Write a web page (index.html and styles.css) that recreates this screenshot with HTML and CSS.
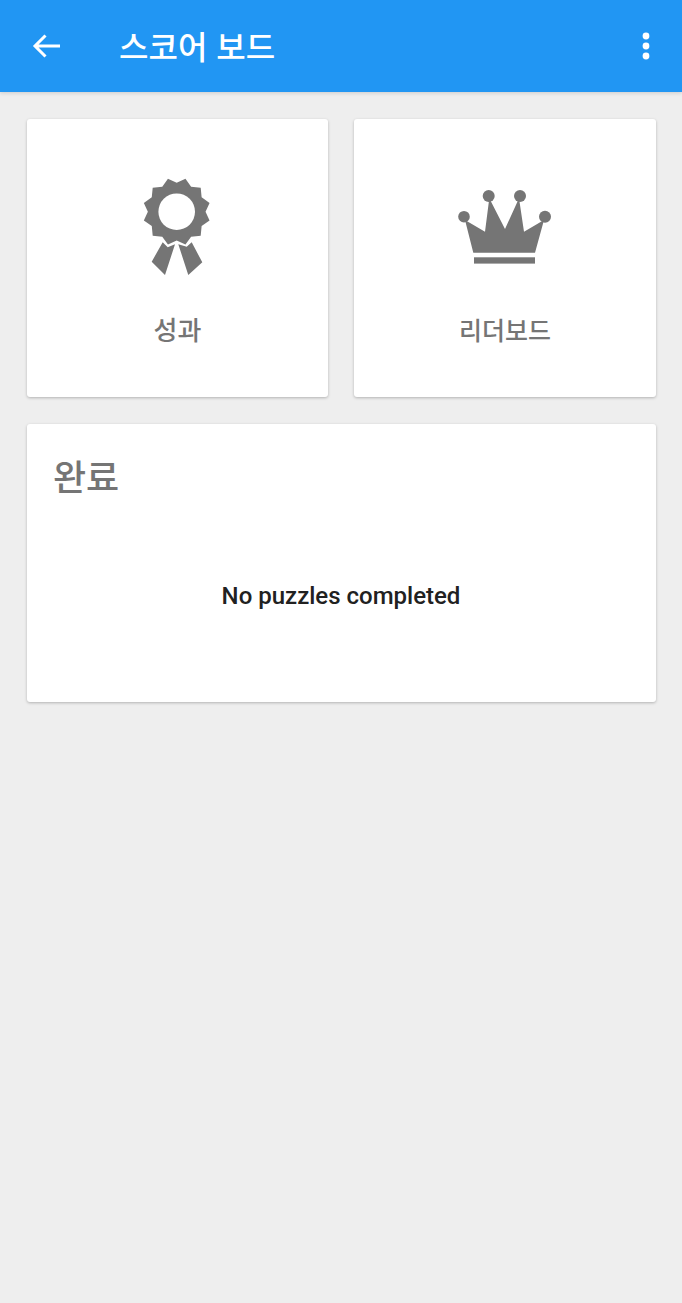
FILE: index.html
```html
<!DOCTYPE html>
<html lang="ko">
<head>
    <meta charset="UTF-8">
    <meta name="viewport" content="width=device-width, initial-scale=1.0">
    <title>스코어 보드</title>
    <link rel="stylesheet" href="styles.css">
</head>
<body>
    <header class="app-bar">
        <svg class="back-icon" viewBox="0 0 30 26" width="30" height="26">
            <path d="M28 13H3M13.5 2.5L3 13l10.5 10.5" fill="none" stroke="#fff" stroke-width="3"/>
        </svg>
        <h1 class="app-title">스코어 보드</h1>
        <svg class="menu-icon" viewBox="0 0 8 28" width="8" height="28">
            <circle cx="4" cy="4" r="3.4" fill="#fff"/>
            <circle cx="4" cy="14" r="3.4" fill="#fff"/>
            <circle cx="4" cy="24" r="3.4" fill="#fff"/>
        </svg>
    </header>
    <main class="content">
        <div class="tile-row">
            <div class="card tile">
                <svg class="tile-icon rosette" viewBox="0 0 75 105" width="75" height="105">
                    <polygon fill="#757575" transform="translate(36.7 36.7) scale(1.03)" points="0,-28 8.5,-31.9 14,-24.2 23.3,-23.3 24.2,-14 31.9,-8.5 28,0 31.9,8.5 24.2,14 23.3,23.3 14,24.2 8.5,31.9 0,28 -8.5,31.9 -14,24.2 -23.3,23.3 -24.2,14 -31.9,8.5 -28,0 -31.9,-8.5 -24.2,-14 -23.3,-23.3 -14,-24.2 -8.5,-31.9"/>
                    <circle cx="36.7" cy="36.7" r="18.3" fill="#fff"/>
                    <polygon fill="#757575" points="22.7,67.3 27.7,72.3 35,69.3 25,100 11.7,86.7"/>
                    <polygon fill="#757575" points="38.3,69.3 46.7,71.7 51.7,67.3 62.3,87.3 48.3,100"/>
                </svg>
                <span class="tile-label">성과</span>
            </div>
            <div class="card tile">
                <svg class="tile-icon crown" viewBox="0 0 100 85" width="100" height="85">
                    <g fill="#757575">
                        <circle cx="9" cy="31.7" r="5.8"/>
                        <circle cx="33.7" cy="11" r="6"/>
                        <circle cx="65" cy="11" r="6"/>
                        <circle cx="90" cy="31.7" r="6"/>
                        <polygon points="10,35 30,46.7 34.3,13.3 50,44 64,13.3 69,46.7 89,35 80,67.7 18.3,67.7"/>
                        <rect x="19" y="72.3" width="61" height="6.3"/>
                    </g>
                </svg>
                <span class="tile-label leaderboard-label">리더보드</span>
            </div>
        </div>
        <section class="card completed">
            <h2 class="completed-title">완료</h2>
            <p class="empty-text">No puzzles completed</p>
        </section>
    </main>
</body>
</html>
```

FILE: styles.css
```css
html, body {
    margin: 0;
    height: 100%;
}
body {
    background: #eeeeee;
    font-family: Roboto, "Noto Sans CJK KR", sans-serif;
}
.app-bar {
    display: flex;
    align-items: center;
    height: 92px;
    padding: 0 32px;
    box-sizing: border-box;
    background: #2196f3;
    box-shadow: 0 1px 4px rgba(0,0,0,0.15);
}
.back-icon {
    flex: none;
}
.app-title {
    flex: 1;
    margin: 0 0 2px 57px;
    color: #fff;
    font-family: "Noto Sans CJK KR", sans-serif;
    font-size: 32px;
    font-weight: 500;
}
.menu-icon {
    flex: none;
}
.content {
    display: flex;
    flex-direction: column;
    gap: 27px;
    padding: 27px 26px 0 27px;
}
.tile-row {
    display: grid;
    grid-template-columns: 301px 302px;
    gap: 26px;
}
.card {
    height: 278px;
    background: #fff;
    border-radius: 3px;
    box-shadow: 0 1px 3px rgba(0,0,0,0.25);
}
.tile {
    display: flex;
    flex-direction: column;
    align-items: center;
}
.tile-icon {
    flex: none;
}
.rosette {
    margin-top: 56px;
}
.crown {
    margin-top: 66px;
}
.tile-label {
    color: #757575;
    font-family: "Noto Sans CJK KR", sans-serif;
    font-size: 26px;
    font-weight: 500;
    line-height: 36px;
}
.rosette + .tile-label {
    margin-top: 31px;
}
.crown + .tile-label {
    margin-top: 41px;
}
.leaderboard-label {
    font-size: 25px;
}
.completed {
    padding: 27px 27px 27px 26px;
    box-sizing: border-box;
}
.completed-title {
    margin: 0;
    color: #757575;
    font-family: "Noto Sans CJK KR", sans-serif;
    font-size: 36px;
    font-weight: 500;
    line-height: 48px;
}
.empty-text {
    margin: 81px 0 0;
    color: #212121;
    font-size: 24px;
    font-weight: 500;
    line-height: 32px;
    text-align: center;
}
```
